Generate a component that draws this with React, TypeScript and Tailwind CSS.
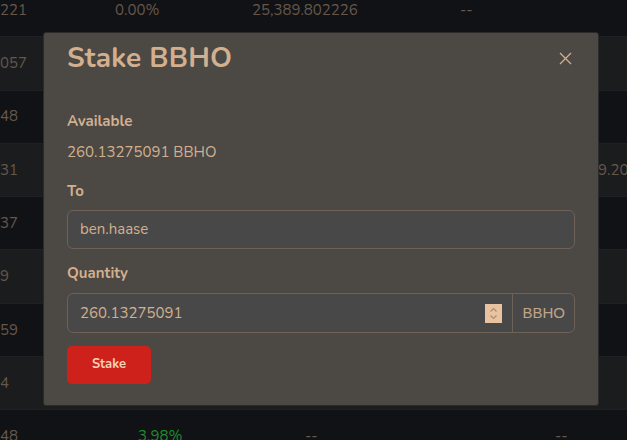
import React from "react";

const rows = [
  { bg: "bg-[#111215]", c1: "221", c2: "0.00%", c3: "25,389.802226", c4: "--" },
  { bg: "bg-[#1b1c1e]", c1: "057" },
  { bg: "bg-[#111215]", c1: "48" },
  { bg: "bg-[#1b1c1e]", c1: "31", right: "9.20" },
  { bg: "bg-[#111215]", c1: "37" },
  { bg: "bg-[#1b1c1e]", c1: "9" },
  { bg: "bg-[#111215]", c1: "59" },
  { bg: "bg-[#1b1c1e]", c1: "4" },
  { bg: "bg-[#111215]", c1: "48", green: "3.98%", d1: "--", d2: "--" },
];

export default function App() {
  return (
    <div
      className="relative w-[627px] h-[440px] overflow-hidden bg-[#111215]"
      style={{ fontFamily: "'Nunito', 'Lato', 'Noto Sans', sans-serif" }}
    >
      <div className="mt-[-16px] flex flex-col">
        {rows.map((r, i) => (
          <div
            key={i}
            className={`${r.bg} h-[53.3px] shrink-0 relative border-b border-[#1f2023] text-[15px] text-[#66574a] flex items-center`}
          >
            <span className="absolute left-0">{r.c1}</span>
            {r.c2 && <span className="absolute left-[115px]">{r.c2}</span>}
            {r.c3 && <span className="absolute left-[252px]">{r.c3}</span>}
            {r.c4 && <span className="absolute left-[460px]">{r.c4}</span>}
            {r.right && <span className="absolute left-[598px]">{r.right}</span>}
            {r.green && <span className="absolute left-[138px] text-[#1f8a2a]">{r.green}</span>}
            {r.d1 && <span className="absolute left-[305px]">{r.d1}</span>}
            {r.d2 && <span className="absolute left-[555px]">{r.d2}</span>}
          </div>
        ))}
      </div>

      <div className="absolute left-[43px] top-[32px] w-[556px] h-[374px] bg-[#4c4844] border border-[#2b2b2c] rounded-[3px] flex flex-col text-[#d2b08f]">
        <div className="h-[50px] flex items-center justify-between pl-[23px] pr-[26px]">
          <h1 className="text-[28px] font-bold leading-none tracking-[0.2px]">Stake BBHO</h1>
          <svg width="13" height="13" viewBox="0 0 13 13" className="text-[#d2b08f]">
            <path d="M1 1 L12 12 M12 1 L1 12" stroke="currentColor" strokeWidth="1.3" />
          </svg>
        </div>
        <div className="flex flex-col px-[23px]">
          <div className="mt-[28px] text-[15px] font-bold leading-[20px]">Available</div>
          <div className="mt-[11px] text-[15px] leading-[20px]">260.13275091 BBHO</div>
          <div className="mt-[19px] text-[15px] font-bold leading-[20px]">To</div>
          <div className="mt-[9px] h-[39px] rounded-[6px] border border-[#6d6158] bg-[#484848] flex items-center px-[12px] text-[15px]">
            ben.haase
          </div>
          <div className="mt-[14px] text-[15px] font-bold leading-[20px]">Quantity</div>
          <div className="mt-[10px] h-[40px] rounded-[6px] border border-[#6d6158] bg-[#484848] flex items-stretch text-[15px]">
            <div className="flex-1 flex items-center pl-[12px] pr-[10px]">
              <span className="flex-1">260.13275091</span>
              <span className="w-[17px] h-[19px] bg-[#e9c3a0] flex items-center justify-center">
                <svg width="9" height="13" viewBox="0 0 9 13">
                  <path d="M1.5 4.5 L4.5 1.5 L7.5 4.5 M1.5 8.5 L4.5 11.5 L7.5 8.5" stroke="#a88d76" strokeWidth="1.2" fill="none" />
                </svg>
              </span>
            </div>
            <div
              className="border-l border-[#6d6158] flex items-center px-[9px] text-[15px] text-[#c2a489]"
              style={{ fontFamily: "'Liberation Sans', Arial, sans-serif" }}
            >
              BBHO
            </div>
          </div>
          <div className="mt-[13px]">
            <button className="w-[84px] h-[38px] rounded-[5px] bg-[#cf211c] text-[#f6d3b3] text-[13px] font-bold">
              Stake
            </button>
          </div>
        </div>
      </div>
    </div>
  );
}
